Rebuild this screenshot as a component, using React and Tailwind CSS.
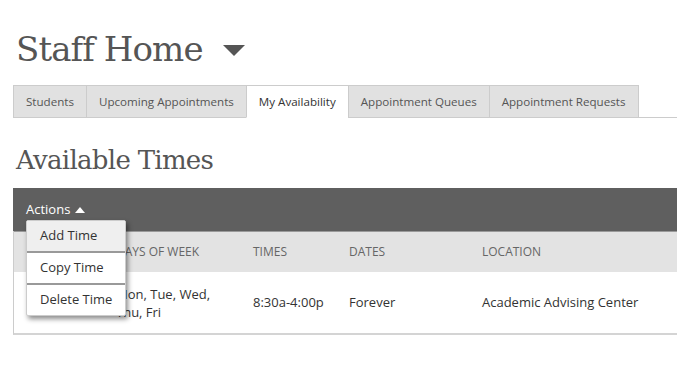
import React from "react";

const tabs = [
  { label: "Students", active: false },
  { label: "Upcoming Appointments", active: false },
  { label: "My Availability", active: true },
  { label: "Appointment Queues", active: false },
  { label: "Appointment Requests", active: false },
];

function App() {
  return (
    <div
      className="w-[677px] h-[366px] overflow-hidden bg-white pl-[13px]"
      style={{ fontFamily: '"Open Sans", sans-serif' }}
    >
      {/* Title */}
      <div className="flex items-center pt-[27px] pl-[3px]">
        <h1
          className="text-[34px] leading-[44px] text-[#555] tracking-[-0.9px]"
          style={{ fontFamily: '"DejaVu Serif", serif' }}
        >
          Staff Home
        </h1>
        <svg width="22" height="11" viewBox="0 0 22 11" className="ml-[20px] mt-[2px]">
          <path d="M0 0 L22 0 L11 11 Z" fill="#555" />
        </svg>
      </div>

      {/* Tabs */}
      <div className="flex mt-[14px] border-b border-[#ccc]">
        {tabs.map((t) => (
          <div
            key={t.label}
            className={`h-[33px] flex items-center px-[12px] text-[11.6px] border-t border-l border-[#ccc] last:border-r last:pr-[13px] -mb-px ${
              t.active
                ? "bg-white text-[#333] border-b border-b-white"
                : "bg-[#e1e1e1] text-[#555] border-b border-b-[#ccc]"
            }`}
          >
            {t.label}
          </div>
        ))}
      </div>

      {/* Section heading */}
      <h2
        className="mt-[25px] pl-[3px] text-[26px] leading-[34px] text-[#555] tracking-[-0.7px]"
        style={{ fontFamily: '"DejaVu Serif", serif' }}
      >
        Available Times
      </h2>

      {/* Table */}
      <div className="relative mt-[11px]">
        <div className="h-[43px] bg-[#5f5f5f] flex items-center pl-[13px] text-[13px] text-white">
          Actions
          <svg width="10" height="6" viewBox="0 0 10 6" className="ml-[5px]">
            <path d="M0 6 L10 6 L5 0 Z" fill="#fff" />
          </svg>
        </div>
        <div className="border-l border-[#ccc] border-b-2 border-b-[#d4d4d4]">
          <div className="h-[41px] bg-[#e3e3e3] border-t border-[#9a9a9a] flex items-center text-[12px] text-[#666] uppercase">
            <div className="w-[102px]" />
            <div className="w-[137px]">Days of Week</div>
            <div className="w-[96px]">Times</div>
            <div className="w-[133px]">Dates</div>
            <div>Location</div>
          </div>
          <div className="h-[61px] bg-white flex items-center text-[13px] text-[#333] pt-[1px]">
            <div className="w-[102px]" />
            <div className="w-[137px] leading-[18px]">
              Mon, Tue, Wed,
              <br />
              Thu, Fri
            </div>
            <div className="w-[96px]">8:30a-4:00p</div>
            <div className="w-[133px]">Forever</div>
            <div>Academic Advising Center</div>
          </div>
        </div>

        {/* Actions dropdown */}
        <div className="absolute left-[13px] top-[32px] w-[100px] bg-white border border-[#ccc] rounded-[2px] shadow-[2px_3px_5px_rgba(0,0,0,0.45)] text-[13px] text-[#333]">
          <div className="h-[30px] flex items-center pl-[13px] bg-[#efefef]">Add Time</div>
          <div className="h-[2px] bg-[#999]" />
          <div className="h-[30px] flex items-center pl-[13px]">Copy Time</div>
          <div className="h-[2px] bg-[#999]" />
          <div className="h-[30px] flex items-center pl-[13px]">Delete Time</div>
        </div>
      </div>
    </div>
  );
}

export default App;
